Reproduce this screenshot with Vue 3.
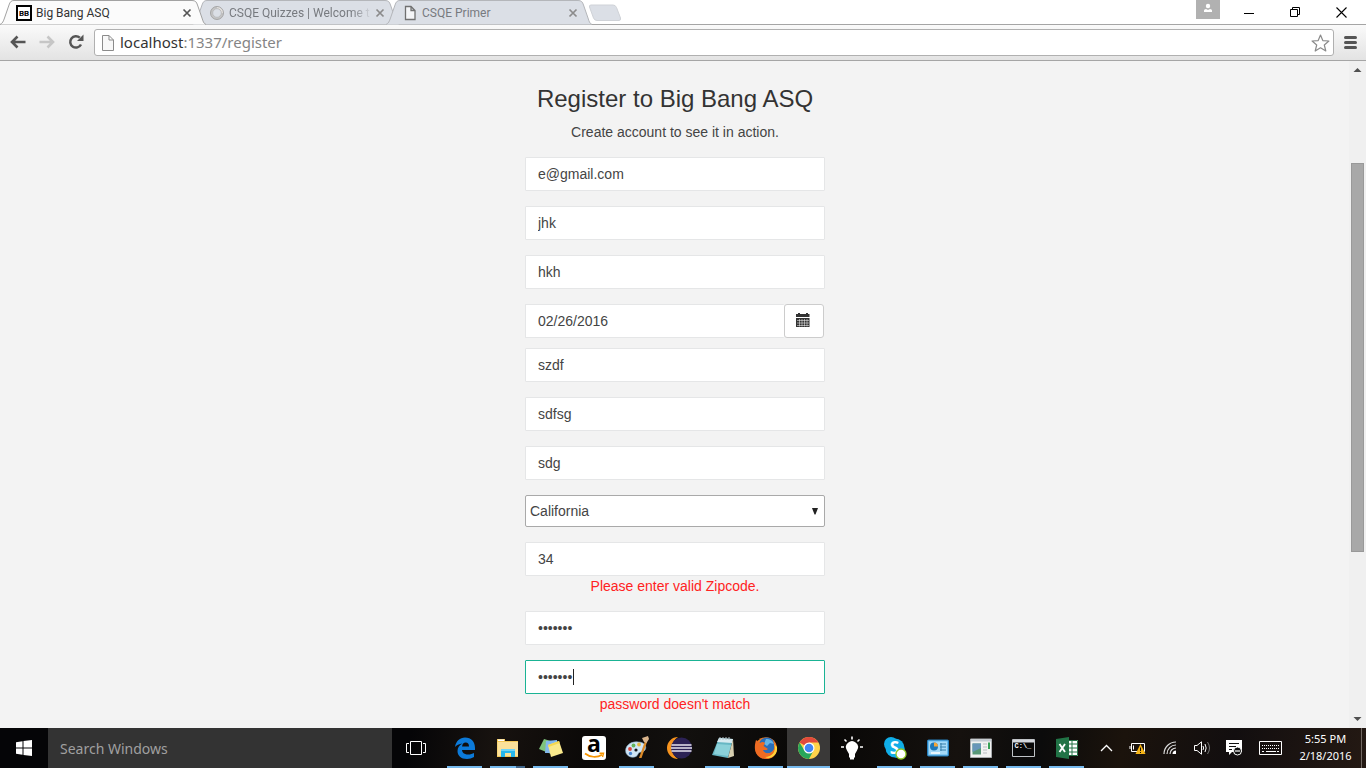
<script setup>
import { ref } from 'vue'

const tabs = [
  { title: 'Big Bang ASQ', icon: 'bb', active: true },
  { title: 'CSQE Quizzes | Welcome t', icon: 'spin', active: false, fades: true },
  { title: 'CSQE Primer', icon: 'page', active: false },
]

const before = ref([
  { id: 'email', label: 'Email', type: 'email', value: 'e@gmail.com' },
  { id: 'first', label: 'First name', type: 'text', value: 'jhk' },
  { id: 'last', label: 'Last name', type: 'text', value: 'hkh' },
])
const date = ref('02/26/2016')
const address = ref([
  { id: 'company', label: 'Company', type: 'text', value: 'szdf' },
  { id: 'street', label: 'Street', type: 'text', value: 'sdfsg' },
  { id: 'city', label: 'City', type: 'text', value: 'sdg' },
])
const region = ref('California')
const zip = ref('34')
const password = ref('abcdefg')
const confirm = ref('abcdefh')

const apps = [
  { name: 'Edge', icon: 'edge', open: true },
  { name: 'File Explorer', icon: 'explorer', open: true, stacked: true },
  { name: 'Sticky Notes', icon: 'sticky', open: true },
  { name: 'Amazon', icon: 'amazon' },
  { name: 'Paint', icon: 'paint', open: true },
  { name: 'Eclipse', icon: 'eclipse' },
  { name: 'Notepad', icon: 'notepad', open: true },
  { name: 'Firefox', icon: 'firefox', open: true },
  { name: 'Chrome', icon: 'chrome', open: true, current: true },
  { name: 'Tips', icon: 'bulb' },
  { name: 'Skype', icon: 'skype', open: true },
  { name: 'Control Panel', icon: 'panel', open: true },
  { name: 'Viewer', icon: 'viewer', open: true },
  { name: 'Command Prompt', icon: 'cmd', open: true },
  { name: 'Excel', icon: 'excel', open: true },
]
</script>

<template>
  <div class="desktop">
    <header class="browser">
      <div class="strip">
        <nav class="tabs" aria-label="Tabs">
          <div v-for="tab in tabs" :key="tab.title" class="tab" :class="{ active: tab.active }">
            <svg class="tab-shape" viewBox="0 0 206 25" width="206" height="25">
              <path
                d="M0 24.5C2.500 23.500 3.500 21 4.500 18L9 5C10 2 11 .5 14 .5H192C195.500 .5 196.500 2 197.500 5L202 18C203 21 203.500 23.500 206 24.500"
                :fill="tab.active ? '#fbfbfb' : '#dbdfe6'"
                :stroke="tab.active ? '#a2a2a2' : '#b4b6ba'"
              />
            </svg>
            <svg v-if="tab.icon === 'bb'" class="fav" viewBox="0 0 16 16">
              <rect x="1" y="1" width="14" height="14" fill="#fff" stroke="#000" stroke-width="2" />
              <text x="8" y="11" text-anchor="middle" font-size="8" font-weight="700" font-family="Roboto, sans-serif">BB</text>
            </svg>
            <svg v-else-if="tab.icon === 'spin'" class="fav" viewBox="0 0 16 16" fill="none">
              <circle cx="8" cy="8" r="5.500" stroke="#c4c4c4" stroke-width="2" />
              <path d="M8 2.500A5.500 5.500 0 0 1 13.500 8" stroke="#e4e2e0" stroke-width="2" />
              <circle cx="8" cy="8" r="6.500" stroke="#999" stroke-width=".8" />
              <circle cx="8" cy="8" r="4.300" stroke="#aaa" stroke-width=".6" />
            </svg>
            <svg v-else class="fav" viewBox="0 0 16 16" fill="#f4f5f7" stroke="#707070" stroke-width="1.300">
              <path d="M3.500 1.500H9L13 5.500V14.500H3.500ZM9 1.500V5.500H13" />
            </svg>
            <span class="tab-title" :class="{ fades: tab.fades }">{{ tab.title }}</span>
            <button class="tab-close" :aria-label="'Close ' + tab.title">
              <svg viewBox="0 0 10 10" width="10" height="10"><path d="M1.500 1.500L8.500 8.500M8.500 1.500L1.500 8.500" stroke="currentColor" stroke-width="1.700" /></svg>
            </button>
          </div>
        </nav>
        <button class="new-tab" aria-label="New tab">
          <svg viewBox="0 0 34 18" width="34" height="18"><path d="M3 1H25Q27.500 1 28.500 3.500L32.500 14Q33 16.500 31 16.500H9Q6.500 16.500 5.500 14L1.500 3Q1 1 3 1Z" fill="#dbdfe6" stroke="#cfd2d7" /></svg>
        </button>
        <div class="window-buttons">
          <button class="profile" aria-label="Profile">
            <svg viewBox="0 0 24 19" width="24" height="19"><circle cx="12" cy="6" r="2.200" fill="#fff" /><path d="M8 12V10.500Q8 9 10 9L12 10L14 9Q16 9 16 10.500V12Z" fill="#fff" /></svg>
          </button>
          <button aria-label="Minimize"><svg viewBox="0 0 11 11" width="11" height="11"><path d="M0 6.500H10" stroke="#000" /></svg></button>
          <button aria-label="Restore"><svg viewBox="0 0 11 11" width="11" height="11" fill="none" stroke="#000"><path d="M.5 2.500H7.500V9.500H.5ZM2.500 2.500V.5H9.500V7.500H7.500" /></svg></button>
          <button aria-label="Close"><svg viewBox="0 0 11 11" width="11" height="11"><path d="M.5 .5L10.500 10.500M10.500 .5L.5 10.500" stroke="#000" stroke-width="1.100" /></svg></button>
        </div>
      </div>
      <div class="toolbar">
        <button class="tool" aria-label="Back"><svg viewBox="0 0 16 14" width="16" height="14" fill="none" stroke="#555" stroke-width="2.600"><path d="M15.500 7H3M7.500 1.500L2 7L7.500 12.500" /></svg></button>
        <button class="tool" aria-label="Forward"><svg viewBox="0 0 16 14" width="16" height="14" fill="none" stroke="#c6c6c6" stroke-width="2.600"><path d="M.5 7H13M8.500 1.500L14 7L8.500 12.500" /></svg></button>
        <button class="tool" aria-label="Reload"><svg viewBox="0 0 16 16" width="16" height="16"><path d="M13 10.500A5.700 5.700 0 1 1 11.800 3.700" fill="none" stroke="#555" stroke-width="2.500" /><path d="M15.500 .5V7H9Z" fill="#555" /></svg></button>
        <div class="omnibox">
          <svg class="doc" viewBox="0 0 14 16" width="14" height="16" fill="#f8f8f8" stroke="#8b8b8b"><path d="M1.500 .5H8L12.500 5V15.500H1.500ZM8 .5V5H12.500" /></svg>
          <a class="url" href="#"><b>localhost</b>:1337/register</a>
          <button class="star" aria-label="Bookmark"><svg viewBox="0 0 19 18" width="19" height="18"><path d="M9.500 1L11.800 6.600L17.900 7L13.300 11L14.800 17L9.500 13.800L4.200 17L5.700 11L1.100 7L7.200 6.600Z" fill="#fff" stroke="#8b8b8b" stroke-width="1.200" stroke-linejoin="round" /></svg></button>
        </div>
        <button class="menu" aria-label="Menu"><svg viewBox="0 0 13 13" width="13" height="13" stroke="#555" stroke-width="3" stroke-linecap="round"><path d="M1.500 1.500H11.500M1.500 6.500H11.500M1.500 11.500H11.500" /></svg></button>
      </div>
    </header>

    <div class="viewport">
      <main class="page">
        <form class="register" @submit.prevent>
          <h1>Register to Big Bang ASQ</h1>
          <p class="lead">Create account to see it in action.</p>
          <input v-for="f in before" :key="f.id" v-model="f.value" class="field" :type="f.type" :aria-label="f.label" />
          <div class="date-group">
            <input v-model="date" class="field" type="text" aria-label="Date" />
            <button type="button" class="calendar" aria-label="Pick a date">
              <svg viewBox="0 0 14 14" width="14" height="14">
                <path d="M0 1H2V0H4V1H10V0H12V1H13.500V4H0Z" fill="#333" />
                <path d="M0 5H13.500V14H0Z" fill="#333" />
                <path d="M1 7.500H13M1 10H13M1 12.500H13M3.500 6V13.500M6 6V13.500M8.500 6V13.500M11 6V13.500" stroke="#fff" stroke-width=".5" />
              </svg>
            </button>
          </div>
          <input v-for="f in address" :key="f.id" v-model="f.value" class="field" :type="f.type" :aria-label="f.label" />
          <div class="select-wrap">
            <select v-model="region" aria-label="State"><option>California</option></select>
            <svg class="caret-down" viewBox="0 0 6 7" width="6" height="7"><path d="M0 0H6L3.500 6.500H2.500Z" fill="#222" /></svg>
          </div>
          <div class="checked">
            <input v-model="zip" class="field" type="text" aria-label="Zipcode" />
            <p class="error">Please enter valid Zipcode.</p>
          </div>
          <input v-model="password" class="field" type="password" aria-label="Password" />
          <div class="checked">
            <input v-model="confirm" class="field focused" type="password" aria-label="Confirm password" />
            <i class="text-caret"></i>
            <p class="error">password doesn't match</p>
          </div>
        </form>
      </main>
      <div class="scrollbar" aria-hidden="true">
        <svg viewBox="0 0 17 17" width="17" height="17"><path d="M4.500 11L8.500 7L12.500 11Z" fill="#505050" /></svg>
        <div class="above"></div>
        <div class="thumb"></div>
        <div class="below"></div>
        <svg viewBox="0 0 17 17" width="17" height="17"><path d="M4.500 6L8.500 10L12.500 6Z" fill="#505050" /></svg>
      </div>
    </div>

    <footer class="taskbar">
      <button class="start" aria-label="Start"><svg viewBox="0 0 16 16" width="16" height="16" fill="#fff"><path d="M0 2.200L6.500 1.300V7.500H0ZM7.500 1.100L16 0V7.500H7.500ZM0 8.500H6.500V14.700L0 13.800ZM7.500 8.500H16V16L7.500 14.900Z" /></svg></button>
      <input class="search" type="text" placeholder="Search Windows" aria-label="Search Windows" />
      <button class="task-view" aria-label="Task View"><svg viewBox="0 0 20 14" width="20" height="14" fill="none" stroke="#fff"><path d="M4.500 .5H15.500V13.500H4.500ZM3 2.500H.5V11.500H3M17 2.500H19.500V11.500H17" /></svg></button>
      <div class="apps">
        <button v-for="app in apps" :key="app.name" class="app" :class="{ open: app.open, current: app.current, stacked: app.stacked }" :aria-label="app.name">
          <svg viewBox="0 0 24 24" width="24" height="24">
            <g v-if="app.icon === 'edge'">
              <path d="M2 11C3 5 7 1.500 12 1.500C18.500 1.500 22 6 22 12V14H9C9.200 17 12 18.500 15 18.500C17.500 18.500 19.500 17.800 21 17V21C19 22.300 16.500 23 14 23C8 23 4.500 19.500 4.500 15C4.500 11.500 6.500 8.800 9.500 7.500C6 7.800 3.500 9.200 2 11ZM9.100 10.500H16C16 8 14.800 6.500 12.700 6.500C10.700 6.500 9.300 8 9.100 10.500Z" fill="#0c7ad9" />
            </g>
            <g v-else-if="app.icon === 'explorer'">
              <path d="M1 3H9V5H22V21H1Z" fill="#f4c755" /><path d="M2 3.500H8V5H2Z" fill="#fff" />
              <path d="M1.500 6H22V20H1.500Z" fill="#fbe19a" /><path d="M5 21V13H19V21H15V17H9V21Z" fill="#27b7ed" /><path d="M5 13H19V15H5Z" fill="#70d5f7" />
            </g>
            <g v-else-if="app.icon === 'sticky'">
              <path d="M5 3L15 6L12 18L0 13Z" fill="#7fc47c" /><path d="M7 5L18 4L19 17L6 17Z" fill="#83b8ec" /><path d="M9 9L20 5L24 17L12 21Z" fill="#fae98c" /><path d="M9 9L20 5L20.700 7L9.600 11Z" fill="#f6d84f" />
            </g>
            <g v-else-if="app.icon === 'amazon'">
              <rect width="24" height="24" rx="3" fill="#fff" /><text x="12" y="16" text-anchor="middle" font-size="23" font-weight="700" font-family="Open Sans, sans-serif">a</text>
              <path d="M3 17.500C8 21.500 15 21.800 20 18.700" fill="none" stroke="#f79500" stroke-width="1.700" /><path d="M17.500 17.200H21.500L20.500 21" fill="none" stroke="#f79500" stroke-width="1.400" />
            </g>
            <g v-else-if="app.icon === 'paint'">
              <path d="M1 17C-1 10 6 5 13 6C20 6 22 11 20 14C18 17 14 15 13 18C12 22 4 23 1 17Z" fill="#cfe5f5" stroke="#8fb4ce" stroke-width=".6" />
              <circle cx="5" cy="13" r="1.900" fill="#d9463c" /><circle cx="8.500" cy="9.500" r="1.900" fill="#62b45b" /><circle cx="14" cy="8.500" r="1.900" fill="#e5b742" /><circle cx="5.500" cy="17.500" r="1.700" fill="#4a86cf" /><circle cx="11" cy="14" r="1.600" fill="#15171a" />
              <path d="M14 22L20 5L22 6L16.500 22Z" fill="#db8a28" /><path d="M17 2L23 0L24 3L21.500 7L19 6Z" fill="#d9b48b" />
            </g>
            <g v-else-if="app.icon === 'eclipse'">
              <path d="M10 1A11 11 0 0 0 10 23A13 13 0 0 1 10 1Z" fill="#f7941e" /><circle cx="13.500" cy="12" r="10.500" fill="#2c2255" />
              <path d="M3.500 9H23.500M3 12H24M3.500 15H23.500" stroke="#e7e5ef" stroke-width="1.500" />
            </g>
            <g v-else-if="app.icon === 'notepad'">
              <path d="M8 2L22 3L17 22L1 19Z" fill="#67b7c4" /><path d="M8 2L22 3L21 7L6 6Z" fill="#d6eaf0" /><path d="M6 8L20 9L17 20L3 18Z" fill="#8bd1d9" /><path d="M22 3L23 20L17 22Z" fill="#d7cfb0" /><path d="M9 1V4M12 1V4M15 1V4M18 1V4" stroke="#b5c3c9" />
            </g>
            <g v-else-if="app.icon === 'firefox'">
              <circle cx="12" cy="12" r="10.800" fill="#ef7c22" /><circle cx="12.800" cy="9.500" r="8" fill="#2a6ebb" /><path d="M12 3C16 3 19 5 20 8L16 7L13 10L10 8Z" fill="#63b5e8" />
              <path d="M2 4L6 7C8 5.500 10 6 11 7L9.500 10L14 13C12 15 10 13.500 9 14.500C12 19 18 18 20 14C21 10 20 7 19 5C24 9 24 17 19 21C13 25 5 23 2 17C0 12 1 8 2 4Z" fill="#ee6b22" />
              <path d="M20 8C23 15 18 21 11 21C17 24 24 19 23 11Z" fill="#ffd33a" />
            </g>
            <g v-else-if="app.icon === 'chrome'">
              <circle cx="12" cy="12" r="11" fill="#ffd34a" /><path d="M12 12L2.500 6.500A11 11 0 0 1 21.500 6.500H12Z" fill="#e2493b" /><path d="M2.500 6.500A11 11 0 0 0 12 23L16.500 14.500L12 12L7.500 14.500Z" fill="#27a65b" />
              <circle cx="12" cy="12" r="5.500" fill="#fff" /><circle cx="12" cy="12" r="4.300" fill="#4285f4" />
            </g>
            <g v-else-if="app.icon === 'bulb'" fill="#fff">
              <path d="M7 14.500A6 6 0 1 1 17 14.500L15 18V21.500H14V23.500H10V21.500H9V18Z" /><path d="M12 .5V3.500M4.500 3.500L6.500 5.500M19.500 3.500L17.500 5.500M1 11H4M20 11H23" stroke="#fff" stroke-width="1.600" />
            </g>
            <g v-else-if="app.icon === 'skype'">
              <circle cx="8" cy="8" r="7" fill="#10aee8" /><circle cx="15" cy="15" r="7" fill="#10aee8" /><circle cx="12" cy="12" r="9.500" fill="#10aee8" />
              <text x="11.500" y="17.500" text-anchor="middle" font-size="17" font-weight="700" fill="#fff" font-family="Open Sans, sans-serif">S</text><circle cx="18" cy="18" r="5" fill="#fff" stroke="#8fc827" stroke-width="1.300" />
            </g>
            <g v-else-if="app.icon === 'panel'">
              <rect x="1.500" y="4" width="21" height="16" rx="1" fill="#66b9ed" stroke="#277ebb" /><path d="M3 5.500H21V18.500H3Z" fill="#a6daf8" /><circle cx="8" cy="10.500" r="4" fill="#1d78bb" /><path d="M8 10.500V6.500A4 4 0 0 1 12 10.500Z" fill="#f5a537" />
              <path d="M14 8H20M14 11H20M14 14H20M15 7V15" stroke="#367eaa" /><path d="M5 17H14" stroke="#fff" stroke-width="1.500" />
            </g>
            <g v-else-if="app.icon === 'viewer'">
              <path d="M1.500 3H22.500V21.500H1.500Z" fill="#f2f2f2" stroke="#a8abae" /><path d="M2 3.500H22V5.500H2Z" fill="#c3cbd3" /><path d="M3.500 7.500H12V18.500H3.500Z" fill="#599878" /><path d="M3.500 7.500H12V12L3.500 16Z" fill="#6896b9" /><path d="M14 8H18M14 11H18M14 14H18M14 17H18" stroke="#b9bdc1" /><path d="M20 6.500V13" stroke="#37a157" stroke-width="2" />
            </g>
            <g v-else-if="app.icon === 'cmd'">
              <path d="M.5 3.500H22.500V20.500H.5Z" fill="#090909" stroke="#bfc3c7" /><path d="M1 4H22V6.500H1Z" fill="#d5d8dc" />
              <text x="2.500" y="12" font-size="7" font-weight="700" fill="#fff" font-family="Liberation Mono, monospace">C:\_</text>
            </g>
            <g v-else>
              <path d="M12 4H23V20H12Z" fill="#fff" /><path d="M12 4.500H22.500V19.500H12M12 8H23M12 12H23M12 16H23M17 4V20" fill="none" stroke="#247247" /><path d="M1 3L14 1V23L1 21Z" fill="#217346" />
              <path d="M4.500 8L10 16M10 8L4.500 16" stroke="#fff" stroke-width="1.900" />
            </g>
          </svg>
        </button>
      </div>
      <div class="tray">
        <button aria-label="Hidden icons"><svg viewBox="0 0 13 8" width="13" height="8"><path d="M1 7L6.500 1.500L12 7" fill="none" stroke="#fff" stroke-width="1.300" /></svg></button>
        <button aria-label="Battery"><svg viewBox="0 0 16 14" width="16" height="14"><path d="M1.500 2.500H14.500V10.500H1.500ZM0 5V8M3.500 4.500V8.500" fill="none" stroke="#fff" /><path d="M10.500 3L15.500 13H5.500Z" fill="#f5b417" /><path d="M10.500 6.500V10M10.500 11V12" stroke="#111" /></svg></button>
        <button aria-label="Network"><svg viewBox="0 0 14 14" width="14" height="14" fill="none"><path d="M1 13A12 12 0 0 1 13 1M4 13A9 9 0 0 1 13 4M7 13A6 6 0 0 1 13 7" stroke="#ddd" stroke-width="1.200" /><path d="M9.500 13A3.500 3.500 0 0 1 13 9.500V13Z" fill="#fff" /></svg></button>
        <button aria-label="Volume"><svg viewBox="0 0 17 14" width="17" height="14" fill="none" stroke="#fff"><path d="M.5 4.500H3L7.500 .8V13.200L3 9.500H.5Z" /><path d="M9 5Q10.200 7 9 9M11 3Q13.300 7 11 11" /><path d="M13.500 1Q17.500 7 13.500 13" stroke="#777" /></svg></button>
        <button aria-label="Notifications"><svg viewBox="0 0 17 16" width="17" height="16"><path d="M0 0H16V12H6L3 15V12H0Z" fill="#fff" /><path d="M3 3.500H13M3 6.500H10M3 9.500H6" stroke="#111" /><circle cx="11.500" cy="11" r="4" fill="#111" stroke="#fff" /><path d="M9 11H14" stroke="#fff" stroke-width="1.200" /></svg></button>
        <button class="keyboard" aria-label="Touch keyboard"><svg viewBox="0 0 23 14" width="23" height="14" fill="none" stroke="#fff"><path d="M.5 .5H22.500V13.500H.5Z" /><path d="M3 4.500H20M3 7.500H20" stroke-dasharray="1 1" /><path d="M3 10.500H5M7 10.500H17M18 10.500H20" /></svg></button>
        <button class="clock"><span>5:55 PM</span><span>2/18/2016</span></button>
        <div class="peek"></div>
      </div>
    </footer>
  </div>
</template>

<style>
html, body { margin: 0; background: #f3f3f3; }
</style>

<style scoped>
* { box-sizing: border-box; }
button { padding: 0; border: 0; background: none; font: inherit; color: inherit; display: flex; align-items: center; justify-content: center; }
svg { display: block; flex: none; overflow: visible; }
.desktop { display: flex; flex-direction: column; height: 100vh; overflow: hidden; font-family: "Liberation Sans", Arial, sans-serif; font-size: 14px; color: #444; }

.browser { flex: none; font-family: "Noto Sans", "Open Sans", sans-serif; background: #fff; }
.strip { display: flex; height: 25px; border-bottom: 1px solid #a5a5a5; }
.tabs { display: flex; }
.tab { position: relative; display: flex; align-items: center; width: 193px; height: 25px; padding: 1px 0 0 16px; font-family: Roboto, "Noto Sans", sans-serif; font-size: 12px; color: #777a7f; }
.tab.active { z-index: 2; color: #333; }
.tab-shape { position: absolute; left: 0; top: 0; }
.fav { position: relative; width: 16px; height: 16px; }
.tab-title { position: relative; flex: 1; margin: 0 0 0 4px; white-space: nowrap; }
.tab-title.fades { mask-image: linear-gradient(90deg, #000 84%, transparent 98%); }
.tab-close { position: relative; width: 10px; height: 10px; margin-right: 1px; color: #8b8b8b; }
.tab.active .tab-close { color: #555; }
.new-tab { margin-left: 9px; padding-top: 2px; }
.window-buttons { display: flex; margin-left: auto; height: 24px; padding-right: 2px; }
.window-buttons button { width: 46px; }
.window-buttons .profile { width: 24px; height: 19px; margin-right: 6px; background: #b1b1b1; }
.toolbar { display: flex; align-items: center; height: 36px; padding: 0 9px 0 3px; background: linear-gradient(#fafafa, #e3e3e3); border-bottom: 1px solid #a5a5a5; }
.tool { width: 29px; height: 28px; padding-bottom: 1px; }
.omnibox { flex: 1; display: flex; align-items: center; height: 27px; margin: 0 10px 0 4px; padding: 0 3px 0 6px; background: #fff; border: 1px solid #b0b0b0; border-radius: 3px; }
.url { flex: 1; margin-left: 5px; padding-bottom: 1px; font-size: 15px; line-height: 20px; color: #858585; text-decoration: none; }
.url b { font-weight: 400; color: #333; }
.menu { width: 13px; height: 28px; }

.viewport { flex: 1; display: flex; min-height: 0; background: #f3f3f3; }
.page { flex: 1; overflow: hidden; padding: 25px 0 0 1px; }
.register { display: flex; flex-direction: column; gap: 15px; width: 300px; max-width: 100%; margin: 0 auto; text-align: center; }
h1 { margin: 0 0 -5px; font-size: 24px; line-height: 26px; font-weight: 400; color: #333; white-space: nowrap; }
.lead, .error { margin: 0; line-height: 20px; }
.error { color: #f22; }
.field { display: block; width: 100%; height: 34px; padding: 6px 12px; border: 1px solid #e5e6e7; border-radius: 1px; background: #fff; color: #444; font: inherit; line-height: 20px; outline: 0; }
.field.focused { border-color: #1ab394; }
.date-group { display: flex; margin: 0 1px -5px 0; }
.date-group .field { flex: 1; min-width: 0; border-right: 0; }
.calendar { width: 40px; height: 34px; padding: 0 2px 2px 0; background: #fff; border: 1px solid #ccc; border-radius: 3px; }
.select-wrap { position: relative; }
select { appearance: none; display: block; width: 100%; height: 32px; padding: 0 4px; border: 1px solid #a9a9a9; border-radius: 2px; background: #fff; color: #444; font: inherit; }
.caret-down { position: absolute; right: 7px; top: 13px; }
.checked { position: relative; }
.text-caret { position: absolute; left: 48px; top: 9px; width: 1px; height: 16px; background: #222; }
.scrollbar { display: flex; flex-direction: column; width: 17px; background: #f0f0f0; }
.above { flex: 85; }
.thumb { flex: 388; margin: 0 2px; background: #a8a8a8; border: 1px solid #999; }
.below { flex: 160; }

.taskbar { flex: none; display: flex; height: 40px; color: #fff; font-family: "Noto Sans", "Open Sans", sans-serif; background: linear-gradient(100deg, #050507 0%, #050507 30%, #17120f 36%, #0b0908 43%, #12100e 50%, #080706 60%, #15110e 70%, #0b0b0b 76%, #1b130c 82%, #120e0f 90%, #241913 100%); }
.start { width: 48px; }
.search { flex: 0 1 344px; min-width: 100px; padding: 0 12px; border: 0; border-radius: 0; background: #333; color: #fff; font: inherit; font-size: 14px; outline: 0; }
.search::placeholder { color: #a0a0a0; opacity: 1; }
.task-view { width: 48px; margin-right: 3px; }
.apps { display: flex; }
.app { position: relative; width: 43px; }
.app.open::after { content: ""; position: absolute; left: 4px; right: 4px; bottom: 0; height: 2px; background: #76b9ed; }
.app.stacked::after { background: linear-gradient(90deg, #76b9ed 75%, #41668a 75%); }
.app.current { background: #3a3938; }
.app.current::after { left: 0; right: 0; }
.tray { display: flex; margin-left: auto; padding-right: 4px; }
.tray button { width: 32px; }
.tray .keyboard { width: 40px; }
.tray .clock { flex-direction: column; width: 71px; padding-bottom: 2px; font-size: 11px; line-height: 17px; }
.peek { width: 1px; background: #716862; }
</style>
